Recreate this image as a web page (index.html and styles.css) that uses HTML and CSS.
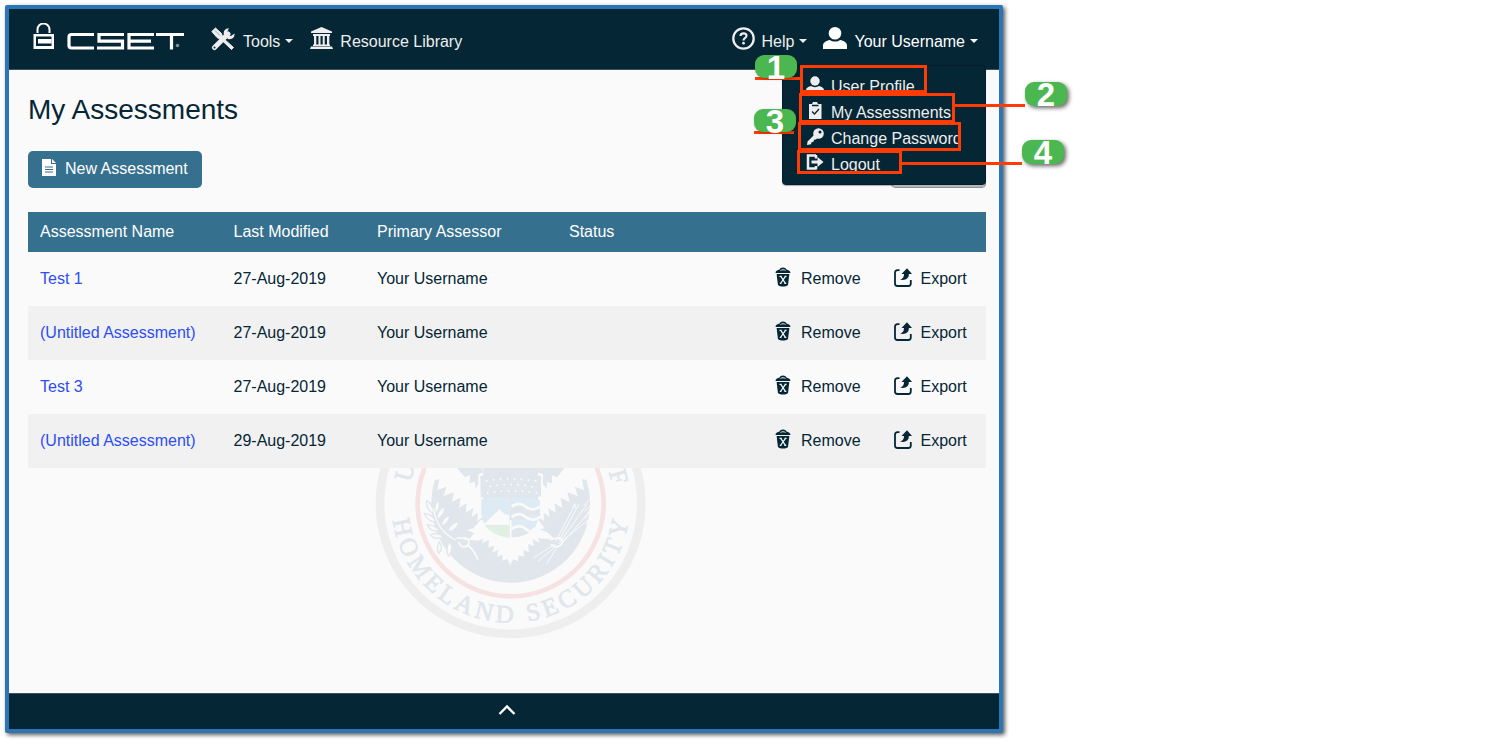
FILE: index.html
```html
<!DOCTYPE html>
<html lang="en">
<head>
<meta charset="utf-8">
<title>CSET - My Assessments</title>
<link rel="stylesheet" href="styles.css">
</head>
<body>
<svg width="0" height="0" class="defs">
  <symbol id="user" viewBox="0 0 24 22"><ellipse cx="12" cy="6.300" rx="6.300" ry="6.300"/><path d="M0 22v-3.500c0-3 3-4.600 7-5.500 2.500 2 7.500 2 10 0 4 .9 7 2.500 7 5.500V22z"/></symbol>
  <symbol id="trash" viewBox="0 0 16 20"><path d="M.6 6C.6 3.500 3 3.200 4.500 2.600 5 1.300 6.300.6 8 .6s3 .7 3.500 2C13 3.200 15.400 3.500 15.400 6z"/><path d="M5.500 3.500c1-1 4-1 5 0" fill="none" stroke="#fafafa" stroke-width=".9"/><path d="M1.600 7h12.800l-1.300 10.500c-.2 1.500-2.600 2-5.100 2s-4.900-.5-5.100-2z"/><path d="m5.800 9.300 4.600 7M10.500 9.300l-5 7.200M4.500 9.300h2.200M9.500 9.300h2M9.300 16.300h2M4.800 16.300h1.700" stroke="#fafafa" stroke-width="1.200" fill="none"/></symbol>
  <symbol id="export" viewBox="0 0 18 19"><path d="M5.500 2.200h-2Q1 2.200 1 4.700v10.800Q1 18 3.500 18h10.800q2.500 0 2.500-2.500V12" fill="none" stroke="currentColor" stroke-width="1.800"/><path d="M6 11.500C9 10.500 10 9 10 6H7.500L13 .2 18 6h-3.200c.4 4.500-3.800 7-8.800 5.500z"/></symbol>
</svg>
<div class="window">
  <header class="topbar">
    <svg class="logo" width="154" height="28" viewBox="0 0 154 28">
      <path d="M4.500 10V6.500a5.900 5.900 0 0 1 12 0V10" fill="none" stroke="#fff" stroke-width="2"/>
      <path fill="#fff" fill-rule="evenodd" d="M.5 11h20.500v15H.5zM3 13.500v9.500h15.500v-9.500z"/><path fill="#fff" d="M5 16h13.500v4.500H5z"/>
      <g fill="none" stroke="#fff" stroke-width="3.200"><path d="M61 11.500H38.500q-2.500 0-2.500 2.500v8.500q0 2.500 2.500 2.500H61"/><path d="M91 11.500H66v6.700h23.500v6.800H64"/><path d="M121 11.500H96v13.500h25M96 18.200h22"/><path d="M123 11.500h28M138.500 11.500v15"/></g>
      <circle cx="144.500" cy="22.500" r="1.800" fill="#809099"/>
    </svg>
    <nav class="nav">
      <a class="nav-item tools"><svg width="24" height="24" viewBox="0 0 24 24"><path d="M3.500 20.500 17 7" stroke="#eee" stroke-width="5" stroke-linecap="round"/><path d="M18 1.200c-4 0-6 3-5 6.500L17 12c4 .8 6.800-1.200 6.500-5.500l-3.500 2.500-3.500-.7-.5-3.300z" fill="#eee"/><path d="M.8 4.500 4.500 1l6 5.500L12 11l10.500 9.500-2 2L10 12.500 6 10.500z" fill="#eee" stroke="#eee"/><path d="m4 3.500 5 5" stroke="#7c8b92" stroke-width=".7"/><circle cx="3.500" cy="20.500" r="1" fill="#052635"/></svg><span>Tools</span><i class="caret"></i></a>
      <a class="nav-item library"><svg width="23" height="22" viewBox="0 0 23 22" fill="#eee"><path d="M11.500 0 22 4.500V6H1V4.500zM3 7h17v2H3zM4 9h2.300v8.500H4zM8.500 9h2v8.500h-2zM12.700 9h2v8.500h-2zM17 9h2.300v8.500H17zM3 17.500h17v1.500H3zM1 19.500h21l1 2.500H0z"/></svg><span>Resource Library</span></a>
    </nav>
    <nav class="nav account">
      <a class="nav-item help"><svg width="23" height="23" viewBox="0 0 23 23"><circle cx="11.500" cy="11.500" r="10.200" fill="none" stroke="#eee" stroke-width="2.300"/><path d="M8.500 9c0-3.600 6.200-3.500 6-.2-.1 2.200-3 2.300-3 4.700" fill="none" stroke="#eee" stroke-width="2.200"/><circle cx="11.500" cy="16.200" r="1.400" fill="#eee"/></svg><span>Help</span><i class="caret"></i></a>
      <a class="nav-item me"><svg width="24" height="22" fill="#fff"><use href="#user"/></svg><span>Your Username</span><i class="caret"></i></a>
    </nav>
  </header>
  <main class="content">
    <svg class="seal" width="290" height="182" viewBox="0 24 870 546">
      <circle cx="437" cy="130" r="392" fill="none" stroke="#eeeeee" stroke-width="26"/>
      <circle cx="437" cy="130" r="279" fill="none" stroke="#f6e2e2" stroke-width="14"/>
      <circle cx="437" cy="130" r="238" fill="#e0e6eb"/>
      <g fill="#fafafa">
        <path id="wing" d="M180 0 190 62 223 58 217 90 245 80 235 108 267 97 260 126 287 113 282 144 305 130 302 158 325 144 320 170 338 158 337 184 355 170V0z"/>
        <use href="#wing" transform="matrix(-1 0 0 1 874 0)"/>
        <path d="M347 180 325 205 305 210 328 220 315 235 285 238 340 242 355 236 350 250 372 240 370 262 388 258 382 278 400 270 396 290 413 284 412 302 427 297 435 315 445 298 458 304 461 286 477 290 475 270 491 276 490 252 508 258 502 236 525 250 518 235 570 238 548 218 525 208 540 205 520 180z"/>
      </g>
      <g fill="#e0e6eb"><path d="M276 24 300 52 315 45 313 70 330 65 331 87 340 72V42L360 37 352 24zM598 24 576 52 560 46 562 70 545 65 546 87 534 72V42L515 37 520 24zM350 24h52l-10 15-35 3zM522 24h-77l15 14 48 4z"/>
        <path d="M346 48Q437 32 528 48V110Q437 98 347 112z"/></g>
      <g fill="none" stroke="#fafafa" stroke-width="6" stroke-linecap="round" stroke-dasharray="0 21"><path d="M365 62q72-12 150 2M376 79q62-12 130 2M368 99q72-12 150 0"/></g>
      <path d="M349 118q45-8 85-7v83h-74q-10-15-11-35z" fill="#deebf4"/><path d="m355 194 24-23 25-23 15 15 14 3v28z" fill="#fafafa"/>
      <path d="M358 195h76v40q-52-8-76-40z" fill="#e2efe5"/>
      <path d="M440 111q45 0 85 9-1 60-14 80-20 28-71 32z" fill="#deebf4"/>
      <path d="M440 144q22-17 42 0t43 0v27q-22-15-43 0t-42 0zM440 212q20-17 60 0-25 20-60 20z" fill="#e0e6eb"/>
      <path d="M440 140q22-17 42 0t43 0M440 171q22-17 42 0t43 0M440 207q22-17 42 0t25-2" stroke="#fafafa" stroke-width="8" fill="none"/>
      <g fill="#fafafa" stroke="#e0e6eb" stroke-width="4">
        <path d="M218 120q-15 20-5 40 18-22 5-40zM185 122q-4 25 20 38 0-28-20-38zM239 140q-25 10-23 38 25-12 23-38zM178 160q8 25 35 26-10-24-35-26zM255 165q-27 8-25 34 22-8 25-34zM187 195q12 23 36 17-15-20-36-17zM283 185q-29 3-34 29 24 2 34-29zM196 225q15 17 40 5-18-16-40-5zM223 246q-10 18-2 34 16-14 2-34zM254 245q-15 22-4 43 20-22 4-43z"/>
        <path d="M205 145q12 70 68 95" fill="none" stroke="#fafafa" stroke-width="4"/>
      </g>
      <g fill="none" stroke="#fafafa" stroke-width="5"><path d="M275 235q45-8 35 20-20 15-30-10M306 255q20 12 33 44M555 240q35-15 38 8-15 22-35 5"/><path stroke-width="3" d="m572 244 58-110m-48 108 60-110m-55 112 80-113m-77 120 101-116m-109 116 110-90M570 252l-65 42m69-36-55 46m60-48-35 58"/><path stroke-width="3" d="m622 145 7-14 4 16m23-10 17-17m-15 34 18-15m-16 37 32-57m-30 75 30-50m-28 66 30-50"/></g>
      <path id="seal-arc" d="M83 177A357 357 0 0 0 791 177" fill="none"/>
      <g class="seal-text"><text textLength="1018" lengthAdjust="spacing"><textPath href="#seal-arc" startOffset="4">HOMELAND SECURITY</textPath></text>
      <text text-anchor="middle" transform="translate(143 42) rotate(-74)">U</text><text text-anchor="middle" transform="translate(737 56) rotate(75)">F</text></g>
    </svg>
    <h1>My Assessments</h1>
    <div class="actions">
      <button class="btn-new"><svg width="14" height="17" viewBox="0 0 14 17"><path d="M0 0h9v5h5v12H0z" fill="#fff"/><path d="M10 0v4h4z" fill="#fff"/><path d="M3 8h8M3 10.500h8M3 13h8" stroke="#36708f" stroke-width="1.200"/></svg>New Assessment</button>
      <button class="btn-import"></button>
    </div>
    <div class="table">
      <div class="row head"><span>Assessment Name</span><span>Last Modified</span><span>Primary Assessor</span><span>Status</span></div>
      <div class="row"><a>Test 1</a><span>27-Aug-2019</span><span>Your Username</span><span></span><span class="act"><svg width="16" height="20"><use href="#trash"/></svg>Remove</span><span class="act exp"><svg width="18" height="19"><use href="#export"/></svg>Export</span></div>
      <div class="row alt"><a>(Untitled Assessment)</a><span>27-Aug-2019</span><span>Your Username</span><span></span><span class="act"><svg width="16" height="20"><use href="#trash"/></svg>Remove</span><span class="act exp"><svg width="18" height="19"><use href="#export"/></svg>Export</span></div>
      <div class="row"><a>Test 3</a><span>27-Aug-2019</span><span>Your Username</span><span></span><span class="act"><svg width="16" height="20"><use href="#trash"/></svg>Remove</span><span class="act exp"><svg width="18" height="19"><use href="#export"/></svg>Export</span></div>
      <div class="row alt"><a>(Untitled Assessment)</a><span>29-Aug-2019</span><span>Your Username</span><span></span><span class="act"><svg width="16" height="20"><use href="#trash"/></svg>Remove</span><span class="act exp"><svg width="18" height="19"><use href="#export"/></svg>Export</span></div>
    </div>
  </main>
  <footer class="bottombar"><svg width="18" height="12" viewBox="0 0 18 12"><path d="m1.500 10 7.500-7.500 7.500 7.500" fill="none" stroke="#fff" stroke-width="2.300"/></svg></footer>
</div>
<div class="menu">
  <a class="item profile"><svg width="18" height="17" fill="#eee"><use href="#user"/></svg><span>User Profile</span></a>
  <a class="item mine"><svg width="18" height="17" viewBox="0 0 18 17"><path d="M3 2h3l1-2h4l1 2h3.500v15H3z" fill="#eee"/><path d="M6 3.500h6.500M6 9.500l2.500 2.500 4.500-5" stroke="#052635" stroke-width="1.300" fill="none"/></svg><span>My Assessments</span></a>
  <a class="item password"><svg width="18" height="18" viewBox="0 0 18 18"><path d="m1 17 .5-3.500L9 6l3 3-2 2.500-2 .3-.5 2-2 .5-.5 2z" fill="#eee"/><circle cx="12.500" cy="5.500" r="5.300" fill="#eee"/><circle cx="14" cy="4" r="1.500" fill="#052635"/></svg><span>Change Password</span></a>
  <a class="item logout"><svg width="18" height="17" viewBox="0 0 18 17"><path d="M10 1.500H2v13h8M10 1v3.500M10 15.500V12" stroke="#eee" stroke-width="2.500" fill="none"/><path d="M5.500 6.500h6V3l6 5-6 5V9.500h-6z" fill="#eee"/></svg><span>Logout</span></a>
</div>
<i class="line line-1"></i><i class="line line-2"></i><i class="line line-3"></i><i class="line line-4"></i>
<b class="badge badge-1"><span>1</span></b><b class="badge badge-2"><span>2</span></b><b class="badge badge-3"><span>3</span></b><b class="badge badge-4"><span>4</span></b>
</body>
</html>
```
FILE: styles.css
```css
* { box-sizing: border-box; }
body { margin: 0; padding: 5px; height: 742px; position: relative; overflow: hidden; background: #fff; font: 16px/20px "Liberation Sans", Arial, sans-serif; color: #052635; }
.defs { position: absolute; }
svg { flex: none; }
.window { width: 998px; height: 728px; border: 4px solid #2e75b6; border-radius: 2px; box-shadow: 2px 2px 4px rgba(0,0,0,.65); display: flex; flex-direction: column; background: #fafafa; }
.topbar { height: 61px; background: #052635; border-bottom: 1px solid #3b5360; display: flex; align-items: flex-start; padding: 14px 22px 0 24px; color: #eee; }
.logo { display: block; margin-right: 24px; }
.nav { display: flex; padding-top: 4px; }
.account { margin-left: auto; }
.nav-item { display: flex; align-items: flex-start; }
.nav-item span { margin: 5px 0 0 8px; }
.library { margin-left: 17px; }
.nav-item.library span { margin-left: 7px; }
.help { margin-right: 16px; }
.me { color: #fff; }
.nav-item.me span, .nav-item.help span { margin-left: 7px; }
.account { margin-right: -1px; }
.caret { width: 8px; margin: 12px 0 0 5px; border: 4px solid transparent; border-top-color: currentColor; border-bottom: 0; }
.content { position: relative; flex: 1; padding: 24px 13px 0 19px; }
h1 { position: relative; margin: 0; font-size: 28px; line-height: 32px; font-weight: 400; }
.actions { position: relative; display: flex; justify-content: space-between; margin-top: 25px; height: 37px; }
button { font: inherit; }
.btn-new { width: 174px; height: 37px; padding: 0 0 1px 14px; border: 0; border-radius: 5px; background: #36708f; color: #fff; display: flex; align-items: center; gap: 9px; white-space: nowrap; }
.btn-new svg { margin-bottom: 3px; }
.btn-import { width: 95px; border: 1px solid #8c9499; border-radius: 4px; background: #fafafa; box-shadow: inset 0 -1px #bbb; }
.table { position: relative; margin-top: 24px; }
.row { display: grid; grid-template-columns: 193.5px 143.5px 192px 206px 118px 1fr; height: 54px; align-items: center; padding-left: 12px; white-space: nowrap; }
.row.alt { background: #f1f1f1; }
.row.head { height: 40px; background: #36708f; color: #fff; padding-bottom: 1px; }
.row a { color: #2d4df5; }
.act { display: flex; align-items: center; gap: 10px; }
.act svg { margin-bottom: 4px; fill: currentColor; }
.act.exp { gap: 9px; padding-left: .5px; }
.seal { position: absolute; left: 356px; top: 398px; }
.seal-text { font: 75px "Liberation Serif", serif; fill: #e0e6eb; stroke: #e0e6eb; stroke-width: 2; }
.bottombar { height: 36px; background: #052635; border-top: 1px solid #3b5360; display: flex; justify-content: center; padding: 10px 0 0 6px; }
.menu { position: absolute; left: 782px; top: 65px; width: 204px; height: 120px; border-radius: 4px; background: #052635; border: 1px solid #031d2a; color: #eee; box-shadow: 0 1px 1px rgba(0,0,0,.3); }
.item { display: flex; align-items: flex-start; overflow: hidden; white-space: nowrap; border: 3px solid #ff3c05; }
.item span { margin-left: 7px; }
.profile { width: 127px; height: 28px; margin: -1px 0 0 17px; padding: 8px 0 0 3px; }
.mine { width: 156px; height: 30px; margin-left: 16px; padding: 6px 0 0 4px; }
.password { width: 163px; height: 29px; margin: -1px 0 0 15px; padding: 3px 0 0 5px; }
.logout { width: 105px; height: 24px; margin: -1px 0 0 14px; padding: 1px 0 0 6px; }
.profile span { margin-top: 1px; }
.mine span { margin-top: 1px; }
.password span { margin-top: 1px; }
.logout span { margin-top: 1px; }
.line { position: absolute; height: 3px; background: #ff3c05; }
.line-1 { left: 755px; top: 77px; width: 45px; }
.line-2 { left: 955px; top: 104px; width: 70px; }
.line-3 { left: 754px; top: 131px; width: 40px; }
.line-4 { left: 902px; top: 162px; width: 120px; }
.badge { position: absolute; width: 42px; height: 23px; border-radius: 9px; background: #4bb750; box-shadow: 2px 2px 4px rgba(0,0,0,.6); color: #fff; font-size: 33px; line-height: 26px; text-align: center; display: flex; justify-content: center; }
.badge-1 { left: 755px; top: 55px; }
.badge-2 { left: 1025px; top: 82px; height: 24px; }
.badge-3 { left: 754px; top: 109px; }
.badge-4 { left: 1022px; top: 140px; height: 24px; }
.badge-1, .badge-3 { box-shadow: 1px 1px 3px rgba(0,0,0,.3); }
```
